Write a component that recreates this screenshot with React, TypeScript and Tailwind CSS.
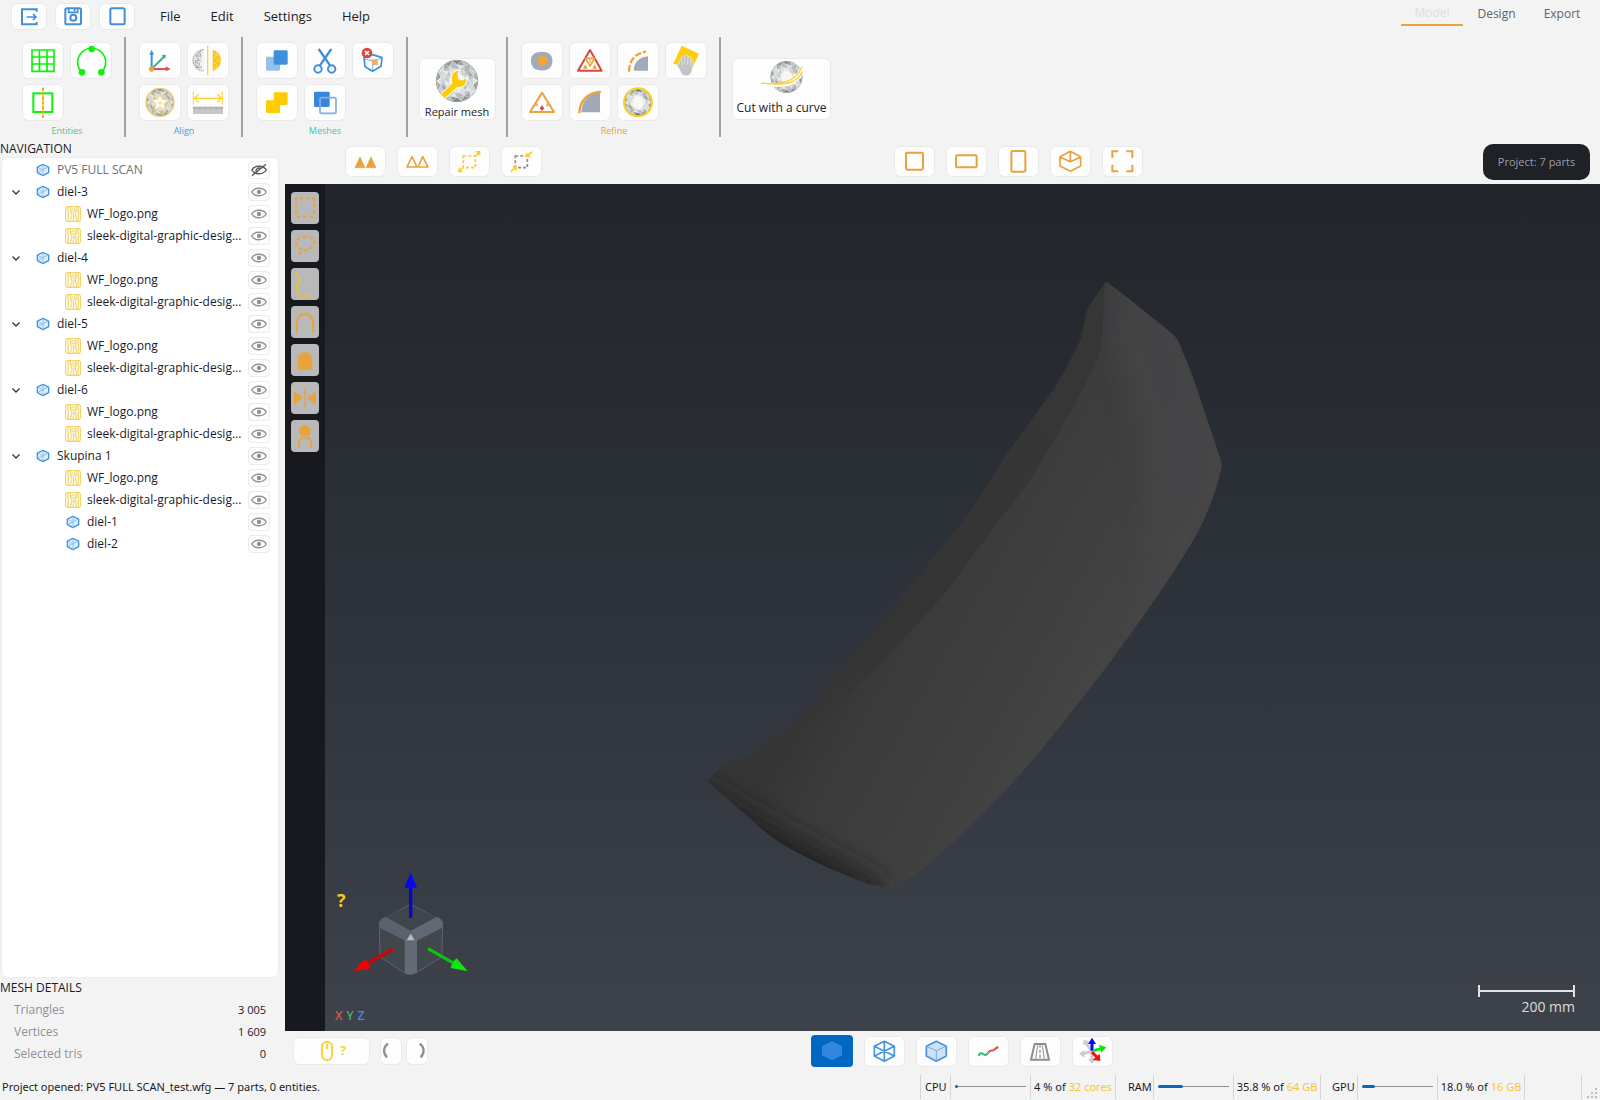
import React from "react";

type Kids = { children?: React.ReactNode };

const BLUE = "#3f8fdc";
const GREEN = "#0df20d";
const ORANGE = "#e8a33d";
const YELLOW = "#ffcc00";

/* A button whose drawing fills its whole face. */
function IconButton({ label, box, size, children }: Kids & { label: string; box: string; size: string }) {
  return (
    <button
      type="button"
      aria-label={label}
      className={`shrink-0 rounded-md bg-[#fdfdfd] ring-1 ring-inset ring-[#e9e9e9] ${size}`}
    >
      <svg viewBox={box} className="block h-full w-full" fill="none">
        {children}
      </svg>
    </button>
  );
}

const RIBBON = "h-[37px] w-[42px]";
const VIEW = "h-[31px] w-[41px]";

/* Faceted ball, built as rings of triangles with alternating shades. */
function Gem({ cx, cy, r, dark = "#7f8585", light = "#f6f6f6" }: { cx: number; cy: number; r: number; dark?: string; light?: string }) {
  const shades = ["#969b9b", "#c9cdcd", dark, "#dfe2e2", "#a9aeae", "#c0c4c4", "#8d9393"];
  const n = 14;
  const pt = (k: number, i: number, off: number) => {
    const a = ((i + off) / n) * Math.PI * 2;
    return `${(cx + r * k * Math.cos(a)).toFixed(1)},${(cy + r * k * Math.sin(a)).toFixed(1)}`;
  };
  const rings = [1, 0.8, 0.6, 0.38];
  const out: React.ReactNode[] = [];
  for (let j = 0; j < rings.length - 1; j++) {
    const o = j * 0.5;
    for (let i = 0; i < n; i++) {
      const fade = 1 - j * 0.27;
      out.push(
        <polygon key={`a${j}-${i}`} points={`${pt(rings[j], i, o)} ${pt(rings[j], i + 1, o)} ${pt(rings[j + 1], i, o + 0.5)}`} fill={shades[(i * 3 + j) % 7]} opacity={fade} stroke="#f4f4f4" strokeWidth={0.5} />,
        <polygon key={`b${j}-${i}`} points={`${pt(rings[j], i + 1, o)} ${pt(rings[j + 1], i, o + 0.5)} ${pt(rings[j + 1], i + 1, o + 0.5)}`} fill={shades[(i * 5 + j * 2 + 1) % 7]} opacity={fade * 0.8} stroke="#f4f4f4" strokeWidth={0.5} />,
      );
    }
  }
  return (
    <g>
      <circle cx={cx} cy={cy} r={r} fill={light} stroke="#8b9090" strokeWidth={3} />
      {out}
    </g>
  );
}

function Divider() {
  return <div className="w-[2px] shrink-0 self-stretch bg-[#a0a0a5]" />;
}

function Group({ title, color, width, children }: Kids & { title: string; color: string; width: string }) {
  return (
    <section className="flex flex-col items-center pt-[5px]">
      <div className={`flex flex-wrap content-start gap-x-[6px] gap-y-[5px] ${width}`}>{children}</div>
      <h2 className={`mt-[2px] text-[9px] leading-4 ${color}`}>{title}</h2>
    </section>
  );
}

function Header() {
  return (
    <header className="flex h-[33px] shrink-0 items-start">
      <div className="flex gap-2 pl-[11px] pt-[3px]">
        <IconButton label="Open" box="32 8 108 81" size="h-[27px] w-9">
          <path d="M109 34V27H65V72H109V65" stroke={BLUE} strokeWidth="6" />
          <path d="M79 50H106M98 41L107 50L98 59" stroke={BLUE} strokeWidth="5" />
        </IconButton>
        <IconButton label="Save" box="164 8 108 81" size="h-[27px] w-9">
          <rect x="195" y="24" width="47" height="48" rx="5" stroke={BLUE} strokeWidth="6" />
          <path d="M205 24V36H232V24" stroke={BLUE} strokeWidth="5" />
          <path d="M223 25V33" stroke={BLUE} strokeWidth="5" />
          <circle cx="219" cy="52" r="9" stroke={BLUE} strokeWidth="6" />
        </IconButton>
        <IconButton label="New" box="296 8 108 81" size="h-[27px] w-9">
          <rect x="330" y="24" width="43" height="48" rx="5" stroke={BLUE} strokeWidth="6" />
        </IconButton>
      </div>
      <nav className="flex h-[33px] items-center gap-[30px] pl-[25px] text-[13px] text-[#1b1b1f]" aria-label="Menu">
        <button type="button">File</button>
        <button type="button">Edit</button>
        <button type="button">Settings</button>
        <button type="button">Help</button>
      </nav>
      <div role="tablist" className="ml-auto flex pr-[6px] text-xs text-[#63636b]">
        <button role="tab" aria-selected="true" type="button" className="h-[26px] w-[62px] border-b-2 border-[#e8a33d] pt-[2px] text-[#dedee0]">Model</button>
        <button role="tab" aria-selected="false" type="button" className="h-[26px] w-[67px] pt-px">Design</button>
        <button role="tab" aria-selected="false" type="button" className="h-[26px] w-[64px] pt-px">Export</button>
      </div>
    </header>
  );
}

function Ribbon() {
  return (
    <div className="flex h-[104px] shrink-0 pb-0 pl-[22px] pt-1">
      <Group title="Entities" color="text-[#4cc38a]" width="w-[90px]">
        <IconButton label="Grid" box="66 127 126 111" size={RIBBON}>
          <path d="M96 151H162V215H96ZM118 151V215M141 151V215M96 172H162M96 193H162" stroke={GREEN} strokeWidth="5" />
        </IconButton>
        <IconButton label="Arc" box="210 127 126 111" size={RIBBON}>
          <path d="M247 219A42 42 0 1 1 303 219" stroke={GREEN} strokeWidth="5" />
          <g fill={GREEN}><circle cx="275" cy="148" r="10" /><circle cx="246" cy="218" r="10" /><circle cx="304" cy="218" r="10" /></g>
        </IconButton>
        <IconButton label="Mirror plane" box="66 253 126 111" size={RIBBON}>
          <rect x="100" y="281" width="57" height="56" stroke={GREEN} strokeWidth="6" />
          <path d="M129 264V354" stroke={YELLOW} strokeWidth="5" />
          <path d="M129 264V354" stroke={ORANGE} strokeWidth="5" strokeDasharray="7 7" />
        </IconButton>
      </Group>
      <div className="w-3 shrink-0" />
      <Divider />
      <div className="w-[13px] shrink-0" />
      <Group title="Align" color="text-[#4a97df]" width="w-[90px]">
        <IconButton label="Align to axes" box="417 127 126 111" size={RIBBON}>
          <path d="M455 207V160" stroke={BLUE} strokeWidth="6" />
          <path d="M448 165L455 150L462 165Z" fill={BLUE} />
          <path d="M456 207L494 169" stroke="#2db38a" strokeWidth="6" />
          <path d="M485 166L497 165L496 178" fill="#2db38a" />
          <path d="M456 208H500" stroke="#d9534a" strokeWidth="6" />
          <path d="M497 200L512 208L497 215Z" fill="#d9534a" />
          <circle cx="455" cy="208" r="8" fill={ORANGE} />
        </IconButton>
        <IconButton label="Symmetry" box="561 127 126 111" size={RIBBON}>
          <path d="M611 150A32 32 0 0 0 611 214" fill="#e4e6e6" stroke="#90959a" strokeWidth="3" strokeDasharray="5 2" />
          <path d="M611 150L598 158L604 170L588 168L598 182L586 184L600 194L590 204L606 202L611 214M598 158L588 168M586 184L590 204" stroke="#8c9296" strokeWidth="2" />
          <path d="M604 153L611 150V214L603 210L606 202L600 194L607 182L604 170L608 160Z" fill="#f4f5f5" />
          <path d="M623 138V227" stroke="#ffd52e" strokeWidth="4" />
          <path d="M638 150A33 33 0 0 1 638 214Z" fill="#fbc41c" />
          <path d="M638 158L650 164L643 176L658 180L645 190L654 202L638 206M650 154V164L660 172M658 180L662 192" stroke="#ffe27a" strokeWidth="2" />
        </IconButton>
        <IconButton label="Best fit" box="417 253 126 111" size={RIBBON}>
          <Gem cx={480} cy={308} r={41} light="#f3efd8" />
          <circle cx="480" cy="308" r="42" stroke="#ecd070" strokeWidth="4" />
          <path d="M480 284L487 299L506 301L492 313L497 331L480 321L463 331L468 313L454 301L473 299Z" fill="#fffdf2" stroke="#f0d678" strokeWidth="3" />
          <path d="M480 302V318M472 310H488M454 301L442 318M506 301L518 318M463 331L480 345L497 331" stroke="#f0cf60" strokeWidth="2" />
        </IconButton>
        <IconButton label="Measure" box="561 253 126 111" size={RIBBON}>
          <path d="M580 276V314M667 276V314" stroke="#ffd02a" strokeWidth="3" />
          <path d="M584 296H664M596 284L584 296L596 308M652 284L664 296L652 308" stroke="#ffd02a" strokeWidth="4" />
          <rect x="579" y="321" width="90" height="22" fill="#c6c6c6" />
          <path d="M582 322v7M588 322v4M594 322v4M600 322v7M606 322v4M612 322v4M618 322v7M624 322v4M630 322v7M636 322v4M642 322v4M648 322v7M654 322v4M660 322v4M666 322v7" stroke="#7e7e7e" strokeWidth="2" />
        </IconButton>
      </Group>
      <div className="w-3 shrink-0" />
      <Divider />
      <div className="w-[13px] shrink-0" />
      <Group title="Meshes" color="text-[#3fc1b5]" width="w-[138px]">
        <IconButton label="Subtract" box="768 127 126 111" size={RIBBON}>
          <rect x="798" y="171" width="42" height="42" rx="4" fill="#95c0ec" />
          <rect x="821" y="152" width="42" height="43" rx="4" fill={BLUE} />
        </IconButton>
        <IconButton label="Split" box="912 127 126 111" size={RIBBON}>
          <path d="M956 148L990 197M994 148L960 197" stroke={BLUE} strokeWidth="7" />
          <circle cx="954" cy="208" r="11" stroke={BLUE} strokeWidth="6" />
          <circle cx="995" cy="208" r="11" stroke={BLUE} strokeWidth="6" />
        </IconButton>
        <IconButton label="Remove mesh" box="1056 127 126 111" size={RIBBON}>
          <path d="M1092 174L1118 165L1146 174L1143 200L1118 215L1095 201Z" stroke={BLUE} strokeWidth="5" strokeLinejoin="round" />
          <path d="M1094 178L1118 184L1144 176M1118 184V214" stroke={BLUE} strokeWidth="2" />
          <path d="M1113 180L1133 178L1134 195L1119 197Z" fill="#efae5c" />
          <circle cx="1101" cy="160" r="16" fill="#d8473d" />
          <path d="M1095 154L1107 166M1107 154L1095 166" stroke="#fff" strokeWidth="5" />
        </IconButton>
        <IconButton label="Union" box="768 253 126 111" size={RIBBON}>
          <rect x="798" y="302" width="42" height="38" rx="4" fill={YELLOW} />
          <rect x="821" y="278" width="42" height="38" rx="4" fill={YELLOW} />
        </IconButton>
        <IconButton label="Intersect" box="912 253 126 111" size={RIBBON}>
          <rect x="942" y="276" width="47" height="46" rx="4" fill="#3a85dc" />
          <rect x="960" y="294" width="48" height="47" rx="5" stroke="#7bb0ea" strokeWidth="5" />
        </IconButton>
      </Group>
      <div className="w-3 shrink-0" />
      <Divider />
      <div className="flex w-[98px] shrink-0 items-start justify-center pt-[21px]">
        <button type="button" className="flex h-[62px] w-[77px] flex-col items-center rounded-md bg-[#fdfdfd] pt-px text-[11px] leading-[18px] text-[#1b1b1f] ring-1 ring-inset ring-[#e9e9e9]">
          <svg viewBox="105 177 132 132" className="block h-11 w-11 shrink-0" fill="none">
            <Gem cx={171} cy={243} r={62} />
            <path d="M122 283L156 250C148 225 162 210 180 211L174 222L176 236L188 240L200 232C203 252 190 265 172 262L134 296Z" fill={YELLOW} stroke="#fff" strokeWidth="3" />
          </svg>
          <span className="whitespace-nowrap">Repair mesh</span>
        </button>
      </div>
      <Divider />
      <div className="w-[13px] shrink-0" />
      <Group title="Refine" color="text-[#e8a33d]" width="w-[186px]">
        <IconButton label="Smooth" box="363 127 126 111" size={RIBBON}>
          <path d="M400 164C412 153 442 153 452 166C460 177 459 196 449 205C437 216 412 214 402 206C390 194 390 174 400 164Z" fill="#a2a9b8" />
          <circle cx="428" cy="183" r="15" fill="#eda63c" />
        </IconButton>
        <IconButton label="Subdivide" box="507 127 126 111" size={RIBBON}>
          <path d="M570 151L605 213H534Z" stroke="#d8473d" strokeWidth="6" strokeLinejoin="round" />
          <path d="M556 176H584L570 199Z" stroke={ORANGE} strokeWidth="5" />
          <path d="M570 176V190" stroke={ORANGE} strokeWidth="3" />
          <path d="M549 207L556 194L563 207ZM577 207L584 194L591 207Z" fill={ORANGE} />
        </IconButton>
        <IconButton label="Fill edge" box="651 127 126 111" size={RIBBON}>
          <path d="M744 213H701C702 188 718 172 744 170Z" fill="#a2a9b8" />
          <path d="M687 216C688 183 704 161 738 156" stroke="#eba33a" strokeWidth="7" strokeDasharray="20 6" />
        </IconButton>
        <IconButton label="Polish" box="795 127 126 111" size={RIBBON}>
          <path d="M845 138L897 162L876 207L820 192Z" fill="#ffcc10" />
          <path d="M838 192C835 184 840 178 845 182L844 174C848 166 853 170 854 170C857 165 863 166 864 171C870 168 873 173 872 180C878 178 879 184 878 190L876 212C873 226 864 229 855 228C846 226 842 220 841 213L832 199C832 193 835 191 838 192Z" fill="#c4c4c6" stroke="#f7f7f7" strokeWidth="1.5" />
          <path d="M845 182L848 197M854 171V195M864 171L862 195M872 180L870 197" stroke="#ececec" strokeWidth="2" />
        </IconButton>
        <IconButton label="Reduce" box="363 253 126 111" size={RIBBON}>
          <path d="M426 279L462 337H390Z" stroke="#eaa23a" strokeWidth="6" strokeLinejoin="round" />
          <path d="M415 320L411 307L403 319ZM437 320L441 307L449 319Z" fill="#f0b25c" />
          <path d="M426 317L433 326L426 334L419 326Z" fill="#d8473d" />
        </IconButton>
        <IconButton label="Fillet" box="507 253 126 111" size={RIBBON}>
          <path d="M600 338H544C545 305 565 281 600 278Z" fill="#a2a9b8" />
          <path d="M538 341C539 303 563 279 603 276" stroke="#eba33a" strokeWidth="7" />
        </IconButton>
        <IconButton label="Remesh" box="651 253 126 111" size={RIBBON}>
          <Gem cx={714} cy={308} r={39} dark="#5f6669" />
          <circle cx="714" cy="308" r="21" fill="#fafafa" opacity="0.7" />
          <circle cx="714" cy="308" r="42" stroke="#f8d228" strokeWidth="6" />
        </IconButton>
      </Group>
      <div className="w-3 shrink-0" />
      <Divider />
      <div className="flex w-[121px] shrink-0 items-start pl-[11px] pt-[21px]">
        <button type="button" className="flex h-[62px] w-[99px] flex-col items-center rounded-md bg-[#fdfdfd] pt-px text-[11px] text-[#1b1b1f] ring-1 ring-inset ring-[#e9e9e9]">
          <svg viewBox="1076 177 134 108" className="block h-9 w-[45px] shrink-0" fill="none">
            <Gem cx={1158} cy={231} r={47} />
            <path d="M1082 248C1140 262 1186 244 1203 200L1206 212C1196 256 1142 268 1082 250Z" fill="#fff" stroke="#fff" strokeWidth="5" />
            <path d="M1082 249C1142 258 1190 244 1204 200M1112 251C1156 257 1194 246 1206 214" stroke="#fbd02c" strokeWidth="4" />
          </svg>
          <span className="whitespace-nowrap pt-[5px] text-xs leading-4">Cut with a curve</span>
        </button>
      </div>
    </div>
  );
}

function MeshIcon() {
  return (
    <svg viewBox="0 0 42 42" className="h-[14px] w-[14px] shrink-0" fill="none">
      <path d="M21 4L38 12V29L21 38L4 29V12Z" fill="#dcedfc" stroke="#3f93df" strokeWidth="4" strokeLinejoin="round" />
      <path d="M5 28L37 12M22 5L21 38M6 13L21 21" stroke="#8fc0ef" strokeWidth="3" />
    </svg>
  );
}

function TextureIcon() {
  return (
    <svg viewBox="0 0 48 48" className="h-4 w-4 shrink-0" fill="none" stroke="#f1cc4e" strokeWidth="3">
      <rect x="2" y="2" width="44" height="44" rx="3" fill="#fffdf4" />
      <path d="M10 3C5 14 13 20 9 32V46M16 46C17 34 24 30 19 22C16 17 15 10 17 3M25 46C23 38 29 32 26 21M34 46C36 36 30 32 32 22C34 16 34 8 32 3M40 3C36 12 43 20 39 30C38 36 41 40 40 46" />
      <circle cx="25" cy="13" r="5" />
    </svg>
  );
}

function EyeButton({ hidden, name }: { hidden?: boolean; name: string }) {
  return (
    <button type="button" aria-label={`Toggle ${name}`} className="ml-auto mr-[9px] h-[18px] w-[22px] shrink-0 rounded bg-[#fdfdfd] ring-1 ring-inset ring-[#ececef]">
      <svg viewBox="0 0 66 54" className="block h-full w-full" fill="none" stroke={hidden ? "#55555c" : "#8f8f96"} strokeWidth="4">
        <path d="M11 27C20 12 46 12 55 27C46 42 20 42 11 27Z" />
        {hidden ? <path d="M12 44L54 10M25 33C22 25 30 19 38 22" /> : <circle cx="33" cy="27" r="6.5" fill="#8f8f96" stroke="none" />}
      </svg>
    </button>
  );
}

type Node = { name: string; texture?: boolean; hidden?: boolean; kids?: Node[] };

const art: Node[] = [
  { name: "WF_logo.png", texture: true },
  { name: "sleek-digital-graphic-desig...", texture: true },
];

const tree: Node[] = [
  { name: "PV5 FULL SCAN", hidden: true },
  { name: "diel-3", kids: art },
  { name: "diel-4", kids: art },
  { name: "diel-5", kids: art },
  { name: "diel-6", kids: art },
  { name: "Skupina 1", kids: [...art, { name: "diel-1" }, { name: "diel-2" }] },
];

function TreeRow({ node, child }: { node: Node; child?: boolean }) {
  return (
    <li>
      <div className={`flex h-[22px] items-center ${node.texture ? "pl-16" : child ? "pl-[65px]" : ""}`}>
        {!child && (
          <span className="flex w-[35px] shrink-0 pl-[10px]">
            {node.kids && (
              <button type="button" aria-label={`Collapse ${node.name}`}>
                <svg viewBox="0 0 10 10" className="h-[10px] w-[10px]" fill="none" stroke="#333" strokeWidth="1.3">
                  <path d="M1.500 3.500L5 7L8.500 3.500" />
                </svg>
              </button>
            )}
          </span>
        )}
        {node.texture ? <TextureIcon /> : <MeshIcon />}
        <span className={`whitespace-nowrap ${node.texture ? "pl-[6px]" : "pl-[7px]"} ${node.hidden ? "text-[#6f6f77]" : "text-[#1b1b1f]"}`}>{node.name}</span>
        <EyeButton hidden={node.hidden} name={node.name} />
      </div>
      {node.kids && (
        <ul>
          {node.kids.map((k) => (
            <TreeRow key={k.name} node={k} child />
          ))}
        </ul>
      )}
    </li>
  );
}

function Sidebar() {
  const stats = [
    ["Triangles", "3 005"],
    ["Vertices", "1 609"],
    ["Selected tris", "0"],
  ];
  return (
    <aside className="flex w-[285px] shrink-0 flex-col pb-[9px] pr-[6px] text-xs">
      <h2 className="h-5 leading-[23px] text-[#1b1b1f]">NAVIGATION</h2>
      <div className="ml-px flex-1 rounded-md bg-white pt-[2px] ring-1 ring-inset ring-[#ececec]">
        <ul>
          {tree.map((n) => (
            <TreeRow key={n.name} node={n} />
          ))}
        </ul>
      </div>
      <h2 className="h-[21px] leading-5 text-[#1b1b1f]">MESH DETAILS</h2>
      <dl className="pl-[14px] pr-[13px]">
        {stats.map(([k, v]) => (
          <div key={k} className="flex h-[22px] items-center justify-between">
            <dt className="text-[#8f8f99]">{k}</dt>
            <dd className="text-[11px] text-[#1b1b1f]">{v}</dd>
          </div>
        ))}
      </dl>
    </aside>
  );
}

function ViewToolbar() {
  return (
    <div className="flex h-[47px] shrink-0 items-center pl-[60px] pr-[10px] pt-[2px]">
      <div className="flex gap-[11px]">
        <IconButton label="Flat shading" box="0 0 123 93" size={VIEW}>
          <path d="M30 65L45 33L60 65ZM63 65L78 33L93 65Z" fill={ORANGE} stroke={ORANGE} strokeWidth="2" strokeLinejoin="round" />
        </IconButton>
        <IconButton label="Wire shading" box="-7 439 123 93" size={VIEW}>
          <path d="M23 502L38 471L53 502ZM56 502L70 471L86 502Z" stroke={ORANGE} strokeWidth="5" strokeLinejoin="round" />
        </IconButton>
        <IconButton label="Grow selection" box="149 439 123 93" size={VIEW}>
          <rect x="192" y="469" width="36" height="35" stroke="#ffcc22" strokeWidth="5" strokeDasharray="9 6" />
          <path d="M228 470L240 458M190 504L180 514" stroke="#ffcc22" strokeWidth="5" />
          <path d="M227 454H243V470ZM177 503V518H192Z" fill="#ffcc22" />
        </IconButton>
        <IconButton label="Shrink selection" box="305 439 123 93" size={VIEW}>
          <rect x="348" y="469" width="36" height="35" stroke="#8e8e96" strokeWidth="5" strokeDasharray="9 6" />
          <path d="M398 456L386 468M335 516L347 504" stroke="#ffcc22" strokeWidth="5" />
          <path d="M380 458V473H395ZM338 500H353V515Z" fill="#ffcc22" />
        </IconButton>
      </div>
      <div className="flex-1 pl-[11px]" />
      <div className="flex gap-[11px]">
        <IconButton label="Front" box="71 20 123 93" size={VIEW}>
          <rect x="107" y="40" width="51" height="51" rx="4" stroke={ORANGE} strokeWidth="6" />
        </IconButton>
        <IconButton label="Top" box="227 20 123 93" size={VIEW}>
          <rect x="257" y="48" width="62" height="36" rx="4" stroke={ORANGE} strokeWidth="6" />
        </IconButton>
        <IconButton label="Side" box="383 20 123 93" size={VIEW}>
          <rect x="423" y="35" width="42" height="62" rx="4" stroke={ORANGE} strokeWidth="6" />
        </IconButton>
        <IconButton label="Isometric" box="539 20 123 93" size={VIEW}>
          <path d="M600 36L631 52V80L600 96L569 80V52ZM569 53L600 67L631 53M600 37V67" stroke={ORANGE} strokeWidth="5" strokeLinejoin="round" />
        </IconButton>
        <IconButton label="Fit to view" box="695 20 123 93" size={VIEW}>
          <path d="M744 36H726V56M768 36H786V56M726 76V96H744M786 76V96H768" stroke={ORANGE} strokeWidth="6" />
        </IconButton>
      </div>
      <div className="flex-1" />
      <div className="flex h-9 w-[107px] items-center justify-center rounded-[10px] bg-[#1e2126] pt-px text-[11px] text-[#9b9ea6]">Project: 7 parts</div>
    </div>
  );
}

const TOOL = "flex h-8 w-7 rounded bg-[#b9b9ba]";

function ToolStrip() {
  const tools: [string, string, React.ReactNode][] = [
    ["Rectangle select", "33 37 84 96", <rect key="r" x="48" y="56" width="55" height="55" rx="3" stroke={ORANGE} strokeWidth="6" strokeDasharray="12 8" strokeDashoffset="-6" />],
    ["Lasso select", "33 151 84 96", <path key="l" d="M56 224L68 212C50 206 42 188 56 177C68 168 94 169 101 180C107 194 96 206 80 212L66 212" stroke={ORANGE} strokeWidth="6" strokeDasharray="12 7" />],
    ["Curve select", "33 265 84 96", <path key="c" d="M46 279C54 290 61 296 57 309C45 326 50 342 62 348C72 351 82 349 96 347" stroke="#f3c322" strokeWidth="6" strokeDasharray="9 2" />],
    ["Surface select", "33 379 84 96", <path key="s" d="M51 459V428C51 396 99 396 99 428V459" stroke={ORANGE} strokeWidth="6" />],
    ["Solid select", "33 493 84 96", <path key="o" d="M53 570V540C53 510 97 510 97 540V570Z" fill={ORANGE} />],
    ["Mirror selection", "33 607 84 96", <path key="m" d="M75 624V684M44 638L66 655L44 672ZM106 638L84 655L106 672Z" fill={ORANGE} stroke={ORANGE} strokeWidth="4" />],
    ["Invert selection", "33 721 84 96", <g key="i"><circle cx="75" cy="754" r="18" fill={ORANGE} /><path d="M57 804V790C57 768 93 768 93 790V804" stroke="#b9b9ba" strokeWidth="11" /><path d="M57 805V790C57 768 93 768 93 790V805" stroke={ORANGE} strokeWidth="6" /></g>],
  ];
  return (
    <div className="flex w-10 shrink-0 flex-col items-center gap-[6px] bg-[#17191e] pt-2">
      {tools.map(([label, box, icon]) => (
        <button key={label} type="button" aria-label={label} className={TOOL}>
          <svg viewBox={box} className="h-full w-full" fill="none">{icon}</svg>
        </button>
      ))}
    </div>
  );
}

const OUTLINE =
  "M1106 281.500Q1108 282 1111 285Q1146 312 1174 335.500Q1179 340 1183 353Q1190 368 1198 392.500L1221 461Q1222 466 1221 470Q1214 500 1198 531.500C1180 565 1130 637 1091 687C1062 724 1038 755 1013 782C985 813 955 842 932 861Q916 876 902 882Q892 888 884 887Q872 886 861 881C838 873 806 858 784 845Q770 837 754 822L707 781Q712 775 725 763L733 761Q742 759 754 751C770 741 787 728 802 712C823 692 845 665 865 641C897 602 932 560 957 529C978 503 992 477 1009 451L1055 388Q1073 357 1081 339Q1084 324 1087 310Q1095 297 1106 281.500Z";

function Viewport() {
  return (
    <div className="relative flex min-h-0 flex-1 overflow-hidden bg-linear-to-b from-[#222529] via-[#2e333b] to-[#3e434b]">
      <ToolStrip />
      <div className="relative flex-1">
        <svg viewBox="325 184 1275 847" className="absolute inset-0 h-full w-full" fill="none" aria-label="Mesh">
          <defs>
            <linearGradient id="body" gradientUnits="userSpaceOnUse" x1="870" y1="600" x2="1080" y2="720">
              <stop offset="0" stopColor="#353535" />
              <stop offset="0.22" stopColor="#3b3b3c" />
              <stop offset="0.7" stopColor="#404041" />
              <stop offset="1" stopColor="#454546" />
            </linearGradient>
            <linearGradient id="edge" gradientUnits="userSpaceOnUse" x1="1050" y1="400" x2="790" y2="740">
              <stop offset="0" stopColor="#363636" />
              <stop offset="0.6" stopColor="#343434" />
              <stop offset="1" stopColor="#343434" stopOpacity="0" />
            </linearGradient>
            <filter id="soft" x="-30%" y="-30%" width="160%" height="160%"><feGaussianBlur stdDeviation="12" /></filter>
            <clipPath id="part"><path d={OUTLINE} /></clipPath>
          </defs>
          <path d={OUTLINE} fill="url(#body)" />
          <g clipPath="url(#part)">
            <path d="M1112 270L1190 320L1240 466L1200 560L1130 650C1160 560 1150 440 1112 350Z" fill="#474748" opacity="0.7" filter="url(#soft)" />
            <path d="M1104 270L1104 290Q1104 330 1100 351Q1088 383 1065 421C1040 465 1025 490 1005 513L946 592L887 658L820 724L750 790L700 780L760 700L1060 300Z" fill="url(#edge)" />
            <path d="M680 770L750 812L820 850L880 882L880 920L760 880Z" fill="#202122" filter="url(#soft)" />
          </g>
        </svg>
        <svg viewBox="15 0 525 513" className="absolute bottom-0 left-0 h-[171px] w-[175px]" fill="none" aria-label="Orientation cube">
          <path d="M272 132L368 185L366 290L290 338Q272 348 255 340L180 290L178 185Z" fill="#42464d" stroke="#6c727e" strokeWidth="2" />
          <path d="M272 136L350 174L272 214L198 172Z" fill="#40444b" />
          <path d="M178 190Q178 176 198 171L272 212V236L256 242L180 204Z" fill="#5c626d" />
          <path d="M368 190Q368 176 350 171L272 212V236L290 242L366 204Z" fill="#616773" />
          <path d="M254 240L272 224L291 240V336Q272 348 254 338Z" fill="#646b77" />
          <path d="M272 221L284 241H260Z" fill="#b5bbc4" />
          <path d="M272 174V82" stroke="#0808c8" strokeWidth="10" />
          <path d="M272 38L291 82Q272 88 253 82Z" fill="#0808f0" />
          <path d="M219 267L145 309" stroke="#c40808" strokeWidth="10" />
          <path d="M102 334L134 296Q146 308 152 326Z" fill="#ee0505" />
          <path d="M324 266L398 308" stroke="#0cc40c" strokeWidth="10" />
          <path d="M443 334L410 295Q396 306 392 324Z" fill="#0ee60e" />
        </svg>
        <button type="button" className="absolute bottom-[120px] left-3 text-lg leading-[22px] font-bold text-[#f5cc1f]">?</button>
        <div className="absolute bottom-[6px] left-[10px] flex gap-1 text-xs leading-[18px] font-semibold">
          <span className="text-[#d9574c]">X</span>
          <span className="text-[#46b26d]">Y</span>
          <span className="text-[#5484e0]">Z</span>
        </div>
        <div className="absolute right-[25px] bottom-[14px] flex w-[97px] flex-col items-end text-sm leading-5 text-[#dcdcde]">
          <div className="flex h-3 w-full items-center border-x-2 border-[#e2e2e4]">
            <div className="h-[2px] w-full bg-[#e2e2e4]" />
          </div>
          200 mm
        </div>
      </div>
    </div>
  );
}

function BottomBar() {
  return (
    <div className="flex h-[43px] shrink-0 items-center pb-[3px]">
      <button type="button" aria-label="Mouse help" className="ml-2 flex h-7 w-[77px] items-center justify-center gap-[7px] rounded-md bg-[#fdfdfd] pl-1 text-xs font-bold text-[#fbd038] ring-1 ring-inset ring-[#e9e9e9]">
        <svg viewBox="0 0 36 60" className="h-5 w-3" fill="none" stroke="#fbd038" strokeWidth="6">
          <rect x="3" y="3" width="30" height="54" rx="14" />
          <path d="M18 8V24" />
        </svg>
        ?
      </button>
      <div className="flex gap-1 pl-[10px]">
        <IconButton label="Undo" box="301 38 66 84" size="h-7 w-[22px]">
          <path d="M325 58C311 66 309 86 322 99" stroke="#8b8f96" strokeWidth="7" />
        </IconButton>
        <IconButton label="Redo" box="379 38 66 84" size="h-7 w-[22px]">
          <path d="M420 58C434 66 436 86 423 99" stroke="#8b8f96" strokeWidth="7" />
        </IconButton>
      </div>
      <div className="flex-1" />
      <div className="flex items-center gap-[11px]">
        <button type="button" aria-label="Solid" aria-pressed="true" className="h-8 w-[42px] rounded bg-[#0267c0]">
          <svg viewBox="63 30 126 96" className="block h-full w-full"><path d="M126 49L156 64V91L126 106L96 91V64Z" fill="#3387e0" /></svg>
        </button>
        <IconButton label="Wireframe" box="221 32 123 93" size={VIEW}>
          <path d="M282 48L312 63V92L282 108L252 92V63ZM252 63L312 92M312 63L252 92M282 48V108" stroke="#4793dd" strokeWidth="5" strokeLinejoin="round" />
        </IconButton>
        <IconButton label="Solid with edges" box="377 32 123 93" size={VIEW}>
          <path d="M438 48L468 63V92L438 108L408 92V63Z" fill="#cde2f6" stroke="#4793dd" strokeWidth="5" strokeLinejoin="round" />
          <path d="M408 63L438 76L468 63M438 76V108" stroke="#76ade5" strokeWidth="3" />
        </IconButton>
        <IconButton label="Curves" box="533 32 123 93" size={VIEW}>
          <path d="M565 92C568 80 575 83 580 87C587 92 590 87 594 82" stroke="#36b980" strokeWidth="6" />
          <path d="M594 82C600 70 606 80 612 73C616 69 618 67 624 65" stroke="#dc4f45" strokeWidth="6" />
        </IconButton>
        <IconButton label="Perspective" box="689 32 123 93" size={VIEW}>
          <path d="M733 56H765L776 103H722Z" stroke="#8d8d95" strokeWidth="6" />
          <path d="M742 60L736 100M756 60L762 100" stroke="#8d8d95" strokeWidth="3" />
          <path d="M749 58V101" stroke="#8d8d95" strokeWidth="4" strokeDasharray="9 6" />
        </IconButton>
        <IconButton label="Axes" box="845 32 123 93" size={VIEW}>
          <path d="M905 78L885 50M905 78L873 86M905 78V108" stroke="#cdcdcd" strokeWidth="9" />
          <path d="M878 60L880 44L898 48ZM882 75L866 86L882 97ZM893 100H917L905 116Z" fill="#cdcdcd" />
          <path d="M905 76V52" stroke="#0808f0" strokeWidth="9" />
          <path d="M905 37L917 56H893Z" fill="#0808f0" />
          <path d="M910 76L932 70" stroke="#08e608" strokeWidth="9" />
          <path d="M926 58L948 66L933 82Z" fill="#08e608" />
          <path d="M905 80L922 98" stroke="#f01010" strokeWidth="9" />
          <path d="M907 104L930 107L928 85Z" fill="#f01010" />
        </IconButton>
      </div>
      <div className="flex-1" />
      <div className="w-[105px]" />
    </div>
  );
}

function Meter({ name, fill, value, total, readWidth }: { name: string; fill: number; value: string; total: string; readWidth: string }) {
  return (
    <>
      <span className="w-[29px] pl-1 whitespace-nowrap">{name}</span>
      <div className="flex h-full w-[81px] items-center border-x border-[#d5d5d5] px-1">
        <div role="meter" aria-label={name} aria-valuenow={fill} className="relative -mt-[2px] h-px w-full bg-[#8e8e8e]">
          <div className="absolute -top-px h-[3px] rounded-full bg-[#0a66b8]" style={{ width: `${fill}%` }} />
        </div>
      </div>
      <span className={`flex h-full items-center justify-center gap-[3px] border-r border-[#d5d5d5] whitespace-nowrap ${readWidth}`}>
        {value} <span className="text-[#fbc52c]">{total}</span>
      </span>
    </>
  );
}

function StatusBar() {
  return (
    <footer className="flex h-[26px] shrink-0 items-center font-['Noto_Sans',sans-serif] text-[11px] text-[#1b1b1f]">
      <p className="pl-[2px]">Project opened: PV5 FULL SCAN_test.wfg — 7 parts, 0 entities.</p>
      <div className="ml-auto flex h-6 items-center">
        <div className="h-full w-px bg-[#d5d5d5]" />
        <Meter name="CPU" fill={4} value="4 % of" total="32 cores" readWidth="w-[85px]" />
        <div className="w-[8px]" />
        <Meter name="RAM" fill={35.8} value="35.8 % of" total="64 GB" readWidth="w-[87px]" />
        <div className="w-[7px]" />
        <Meter name="GPU" fill={18} value="18.0 % of" total="16 GB" readWidth="w-[87px]" />
        <div className="h-full w-[57px] border-r border-[#d5d5d5]" />
        <svg viewBox="0 0 18 24" className="h-6 w-[18px]" fill="#bdbdbd">
          <path d="M13 13h2v2h-2zM9 17h2v2H9zM13 17h2v2h-2zM5 21h2v2H5zM9 21h2v2H9zM13 21h2v2h-2z" />
        </svg>
      </div>
    </footer>
  );
}

export default function App() {
  return (
    <div className="flex min-h-screen flex-col bg-[#f3f3f3] font-['Open_Sans',sans-serif]">
      <Header />
      <Ribbon />
      <main className="flex flex-1">
        <Sidebar />
        <div className="flex min-w-0 flex-1 flex-col">
          <ViewToolbar />
          <Viewport />
          <BottomBar />
        </div>
      </main>
      <StatusBar />
    </div>
  );
}
